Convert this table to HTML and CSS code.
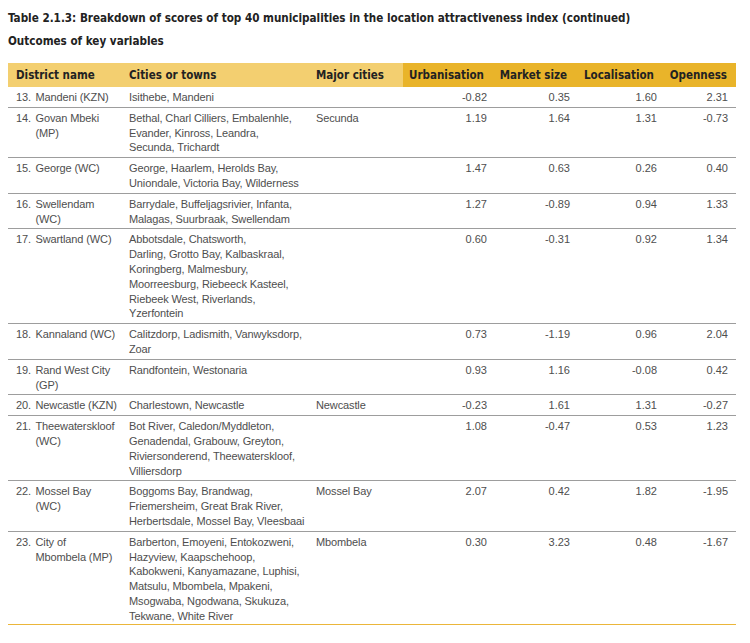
FILE: index.html
```html
<!DOCTYPE html>
<html>
<head>
<meta charset="utf-8">
<link rel="stylesheet" href="styles.css">
</head>
<body>
<div class="page">
  <div class="titles">
    <div class="title">Table 2.1.3: Breakdown of scores of top 40 municipalities in the location attractiveness index (continued)</div>
    <div class="title">Outcomes of key variables</div>
  </div>
  <table class="scores">
    <colgroup>
      <col class="c-district"><col class="c-cities"><col class="c-major"><col class="c-urb"><col class="c-mkt"><col class="c-loc"><col class="c-open">
    </colgroup>
    <thead>
      <tr>
        <th class="h-light">District name</th>
        <th class="h-light">Cities or towns</th>
        <th class="h-light">Major cities</th>
        <th class="h-dark">Urbanisation</th>
        <th class="h-dark">Market size</th>
        <th class="h-dark">Localisation</th>
        <th class="h-dark h-end">Openness</th>
      </tr>
    </thead>
    <tbody>
      <tr>
        <td><div class="dist"><span class="n">13.</span><span>Mandeni (KZN)</span></div></td>
        <td>Isithebe, Mandeni</td><td></td>
        <td class="v">-0.82</td><td class="v">0.35</td><td class="v">1.60</td><td class="v">2.31</td>
      </tr>
      <tr>
        <td><div class="dist"><span class="n">14.</span><span>Govan Mbeki<br>(MP)</span></div></td>
        <td>Bethal, Charl Cilliers, Embalenhle,<br>Evander, Kinross, Leandra,<br>Secunda, Trichardt</td><td>Secunda</td>
        <td class="v">1.19</td><td class="v">1.64</td><td class="v">1.31</td><td class="v">-0.73</td>
      </tr>
      <tr>
        <td><div class="dist"><span class="n">15.</span><span>George (WC)</span></div></td>
        <td>George, Haarlem, Herolds Bay,<br>Uniondale, Victoria Bay, Wilderness</td><td></td>
        <td class="v">1.47</td><td class="v">0.63</td><td class="v">0.26</td><td class="v">0.40</td>
      </tr>
      <tr>
        <td><div class="dist"><span class="n">16.</span><span>Swellendam<br>(WC)</span></div></td>
        <td>Barrydale, Buffeljagsrivier, Infanta,<br>Malagas, Suurbraak, Swellendam</td><td></td>
        <td class="v">1.27</td><td class="v">-0.89</td><td class="v">0.94</td><td class="v">1.33</td>
      </tr>
      <tr>
        <td><div class="dist"><span class="n">17.</span><span>Swartland (WC)</span></div></td>
        <td>Abbotsdale, Chatsworth,<br>Darling, Grotto Bay, Kalbaskraal,<br>Koringberg, Malmesbury,<br>Moorreesburg, Riebeeck Kasteel,<br>Riebeek West, Riverlands,<br>Yzerfontein</td><td></td>
        <td class="v">0.60</td><td class="v">-0.31</td><td class="v">0.92</td><td class="v">1.34</td>
      </tr>
      <tr>
        <td><div class="dist"><span class="n">18.</span><span>Kannaland (WC)</span></div></td>
        <td>Calitzdorp, Ladismith, Vanwyksdorp,<br>Zoar</td><td></td>
        <td class="v">0.73</td><td class="v">-1.19</td><td class="v">0.96</td><td class="v">2.04</td>
      </tr>
      <tr>
        <td><div class="dist"><span class="n">19.</span><span>Rand West City<br>(GP)</span></div></td>
        <td>Randfontein, Westonaria</td><td></td>
        <td class="v">0.93</td><td class="v">1.16</td><td class="v">-0.08</td><td class="v">0.42</td>
      </tr>
      <tr>
        <td><div class="dist"><span class="n">20.</span><span>Newcastle (KZN)</span></div></td>
        <td>Charlestown, Newcastle</td><td>Newcastle</td>
        <td class="v">-0.23</td><td class="v">1.61</td><td class="v">1.31</td><td class="v">-0.27</td>
      </tr>
      <tr>
        <td><div class="dist"><span class="n">21.</span><span>Theewaterskloof<br>(WC)</span></div></td>
        <td>Bot River, Caledon/Myddleton,<br>Genadendal, Grabouw, Greyton,<br>Riviersonderend, Theewaterskloof,<br>Villiersdorp</td><td></td>
        <td class="v">1.08</td><td class="v">-0.47</td><td class="v">0.53</td><td class="v">1.23</td>
      </tr>
      <tr>
        <td><div class="dist"><span class="n">22.</span><span>Mossel Bay<br>(WC)</span></div></td>
        <td>Boggoms Bay, Brandwag,<br>Friemersheim, Great Brak River,<br>Herbertsdale, Mossel Bay, Vleesbaai</td><td>Mossel Bay</td>
        <td class="v">2.07</td><td class="v">0.42</td><td class="v">1.82</td><td class="v">-1.95</td>
      </tr>
      <tr class="last">
        <td><div class="dist"><span class="n">23.</span><span>City of<br>Mbombela (MP)</span></div></td>
        <td>Barberton, Emoyeni, Entokozweni,<br>Hazyview, Kaapschehoop,<br>Kabokweni, Kanyamazane, Luphisi,<br>Matsulu, Mbombela, Mpakeni,<br>Msogwaba, Ngodwana, Skukuza,<br>Tekwane, White River</td><td>Mbombela</td>
        <td class="v">0.30</td><td class="v">3.23</td><td class="v">0.48</td><td class="v">-1.67</td>
      </tr>
    </tbody>
  </table>
</div>
</body>
</html>
```

FILE: styles.css
```css
html, body {
  margin: 0;
  padding: 0;
  background: #ffffff;
}

.page {
  padding: 0 14px 0 8px;
  font-family: "Liberation Sans", Arial, sans-serif;
}

.titles {
  padding-top: 6.5px;
  margin-bottom: 10.5px;
}

.title {
  font-family: "DejaVu Sans Condensed", "Liberation Sans", sans-serif;
  font-weight: bold;
  font-size: 11.6px;
  line-height: 23px;
  color: #222222;
  white-space: nowrap;
}

.scores {
  width: 728px;
  border-collapse: collapse;
  table-layout: fixed;
}

.c-district { width: 113px; }
.c-cities { width: 187px; }
.c-major { width: 95px; }
.c-urb { width: 92px; }
.c-mkt { width: 83px; }
.c-loc { width: 87px; }
.c-open { width: 71px; }

.scores th {
  height: 24px;
  padding: 0 8px;
  font-family: "DejaVu Sans Condensed", "Liberation Sans", sans-serif;
  font-weight: bold;
  font-size: 11.5px;
  color: #222222;
  text-align: left;
  white-space: nowrap;
  vertical-align: middle;
}

.scores th.h-light {
  background: #f3cf70;
}

.scores th.h-dark {
  background: #e9b42a;
  text-align: right;
  padding: 0 11px 0 0;
}

.scores th.h-end {
  padding-right: 9px;
}

.scores td {
  padding: 3px 8px 2px 8px;
  font-size: 11px;
  letter-spacing: -0.12px;
  line-height: 14.8px;
  color: #4e4e4e;
  vertical-align: top;
  white-space: nowrap;
  border-bottom: 1px solid #9d9d9d;
}

.scores tr.last td {
  padding-bottom: 0.5px;
  border-bottom: 1.5px solid #ebb63a;
}

.scores td.v {
  text-align: right;
  letter-spacing: 0;
}

.dist {
  display: flex;
}

.dist .n {
  flex: 0 0 19.5px;
}
```
